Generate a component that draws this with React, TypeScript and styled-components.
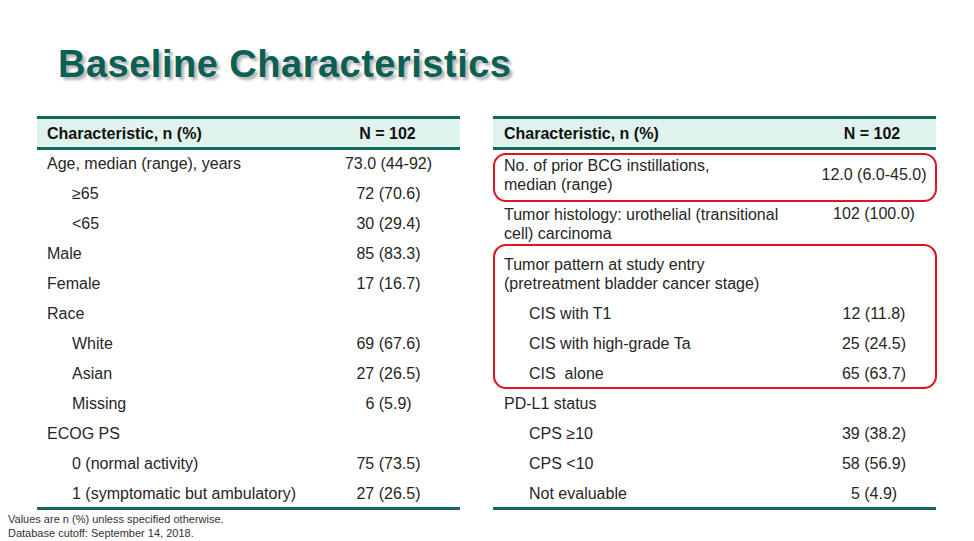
import React from "react";
import styled, { createGlobalStyle } from "styled-components";

const Global = createGlobalStyle`
  html, body { margin: 0; padding: 0; background: #ffffff; }
  body { font-family: "Liberation Sans", Arial, sans-serif; }
`;

const TEAL = "#13695d";
const MINT = "#dff2eb";
const RED = "#e0141e";
const INK = "#262626";

const Page = styled.div`
  width: 974px;
  height: 541px;
  overflow: hidden;
  background: #fff;
  display: flex;
  flex-direction: column;
  color: ${INK};
`;

const Title = styled.h1`
  margin: 0;
  padding: 45px 0 0 58px;
  font-size: 38px;
  line-height: 38px;
  letter-spacing: 0.5px;
  font-weight: bold;
  color: #0b5f55;
  text-shadow: 3px 3px 3px rgba(0, 0, 0, 0.3);
`;

const Tables = styled.div`
  display: flex;
  gap: 33px;
  margin-top: 33px;
  padding-left: 37px;
`;

const Table = styled.div<{ $w: number }>`
  width: ${(p) => p.$w}px;
  display: flex;
  flex-direction: column;
  border-bottom: 3px solid ${TEAL};
`;

const Header = styled.div<{ $pad: number; $vw: number }>`
  display: flex;
  height: 34px;
  box-sizing: border-box;
  border-top: 3px solid ${TEAL};
  border-bottom: 3px solid ${TEAL};
  background: ${MINT};
  padding: 5px 0 0 ${(p) => p.$pad}px;
  font-size: 16px;
  line-height: 20px;
  font-weight: bold;
  color: #111;
  & > span:first-child { flex: 1; }
  & > span:last-child { width: ${(p) => p.$vw}px; text-align: center; }
`;

const Row = styled.div<{ $h?: number; $pt?: number; $pad: number }>`
  display: flex;
  align-items: flex-start;
  box-sizing: border-box;
  height: ${(p) => p.$h ?? 30}px;
  padding: ${(p) => p.$pt ?? 4.5}px 0 0 ${(p) => p.$pad}px;
  font-size: 16px;
  line-height: 18px;
`;

const Label = styled.div<{ $indent?: boolean; $lh?: number }>`
  flex: 1;
  padding-left: ${(p) => (p.$indent ? 25 : 0)}px;
  line-height: ${(p) => p.$lh ?? 18}px;
`;

const Value = styled.div<{ $w: number; $shift?: number; $mt?: number }>`
  width: ${(p) => p.$w}px;
  box-sizing: border-box;
  padding-left: ${(p) => p.$shift ?? 0}px;
  margin-top: ${(p) => p.$mt ?? 0}px;
  text-align: center;
`;

const Highlight = styled.div<{ $top: number; $bottom: number }>`
  position: relative;
  display: flex;
  flex-direction: column;
  &::after {
    content: "";
    position: absolute;
    left: 0;
    right: -1px;
    top: ${(p) => p.$top}px;
    bottom: ${(p) => p.$bottom}px;
    border: 2.5px solid ${RED};
    border-radius: 13px;
    pointer-events: none;
  }
`;

const Footnote = styled.div`
  margin-top: 2px;
  padding-left: 8px;
  font-size: 11px;
  line-height: 14px;
  color: #333;
`;

type R = { label: string; value?: string; indent?: boolean };

const leftRows: R[] = [
  { label: "Age, median (range), years", value: "73.0 (44-92)" },
  { label: "≥65", value: "72 (70.6)", indent: true },
  { label: "<65", value: "30 (29.4)", indent: true },
  { label: "Male", value: "85 (83.3)" },
  { label: "Female", value: "17 (16.7)" },
  { label: "Race" },
  { label: "White", value: "69 (67.6)", indent: true },
  { label: "Asian", value: "27 (26.5)", indent: true },
  { label: "Missing", value: "6 (5.9)", indent: true },
  { label: "ECOG PS" },
  { label: "0 (normal activity)", value: "75 (73.5)", indent: true },
  { label: "1 (symptomatic but ambulatory)", value: "27 (26.5)", indent: true },
];

const LV = 145;
const RV = 128;
const RP = 11;
const RS = 4;

export default function App() {
  return (
    <Page>
      <Global />
      <Title>Baseline Characteristics</Title>
      <Tables>
        <Table $w={423}>
          <Header $pad={10} $vw={LV}>
            <span>Characteristic, n (%)</span>
            <span>N = 102</span>
          </Header>
          {leftRows.map((r, i) => (
            <Row key={r.label} $pad={10} $h={i === leftRows.length - 1 ? 27 : 30}>
              <Label $indent={r.indent}>{r.label}</Label>
              <Value $w={LV} $shift={2}>{r.value ?? ""}</Value>
            </Row>
          ))}
        </Table>
        <Table $w={443}>
          <Header $pad={RP} $vw={RV}>
            <span>Characteristic, n (%)</span>
            <span>N = 102</span>
          </Header>
          <Highlight $top={3} $bottom={-1}>
            <Row $pad={RP} $h={51} $pt={6}>
              <Label $lh={19}>
                No. of prior BCG instillations,
                <br />
                median (range)
              </Label>
              <Value $w={RV} $shift={RS} $mt={10}>
                12.0 (6.0-45.0)
              </Value>
            </Row>
          </Highlight>
          <Row $pad={RP} $h={47} $pt={4}>
            <Label $lh={19}>
              Tumor histology: urothelial (transitional
              <br />
              cell) carcinoma
            </Label>
            <Value $w={RV} $shift={RS}>102 (100.0)</Value>
          </Row>
          <Highlight $top={-4} $bottom={1}>
            <Row $pad={RP} $h={52} $pt={7}>
              <Label $lh={19}>
                Tumor pattern at study entry
                <br />
                (pretreatment bladder cancer stage)
              </Label>
              <Value $w={RV} />
            </Row>
            <Row $pad={RP}>
              <Label $indent>CIS with T1</Label>
              <Value $w={RV} $shift={RS}>12 (11.8)</Value>
            </Row>
            <Row $pad={RP}>
              <Label $indent>CIS with high-grade Ta</Label>
              <Value $w={RV} $shift={RS}>25 (24.5)</Value>
            </Row>
            <Row $pad={RP}>
              <Label $indent>CIS&nbsp; alone</Label>
              <Value $w={RV} $shift={RS}>65 (63.7)</Value>
            </Row>
          </Highlight>
          <Row $pad={RP}>
            <Label>PD-L1 status</Label>
            <Value $w={RV} />
          </Row>
          <Row $pad={RP}>
            <Label $indent>CPS ≥10</Label>
            <Value $w={RV} $shift={RS}>39 (38.2)</Value>
          </Row>
          <Row $pad={RP}>
            <Label $indent>CPS &lt;10</Label>
            <Value $w={RV} $shift={RS}>58 (56.9)</Value>
          </Row>
          <Row $pad={RP} $h={27}>
            <Label $indent>Not evaluable</Label>
            <Value $w={RV} $shift={RS}>5 (4.9)</Value>
          </Row>
        </Table>
      </Tables>
      <Footnote>
        Values are n (%) unless specified otherwise.
        <br />
        Database cutoff: September 14, 2018.
      </Footnote>
    </Page>
  );
}
